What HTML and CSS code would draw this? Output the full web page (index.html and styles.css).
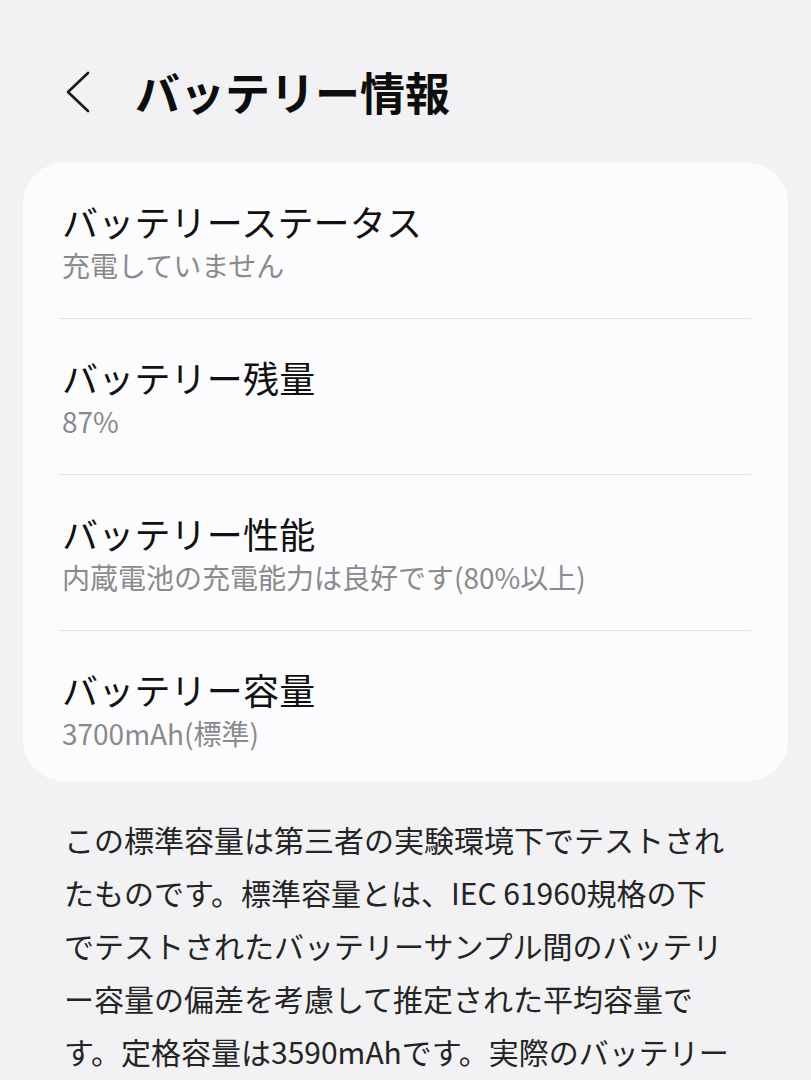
FILE: index.html
```html
<!DOCTYPE html>
<html lang="ja">
<head>
<meta charset="utf-8">
<title>バッテリー情報</title>
<link rel="stylesheet" href="styles.css">
</head>
<body>
<div class="screen">
  <header class="topbar">
    <button class="back" aria-label="戻る">
      <svg width="30" height="46" viewBox="0 0 30 46"><path d="M25 4 L5 23 L25 42" fill="none" stroke="#1a1a1a" stroke-width="2.6" stroke-linecap="round" stroke-linejoin="round"/></svg>
    </button>
    <h1 class="title">バッテリー情報</h1>
  </header>

  <section class="card">
    <div class="item">
      <div class="item-title">バッテリーステータス</div>
      <div class="item-sub">充電していません</div>
    </div>
    <div class="item">
      <div class="item-title">バッテリー残量</div>
      <div class="item-sub">87%</div>
    </div>
    <div class="item">
      <div class="item-title">バッテリー性能</div>
      <div class="item-sub">内蔵電池の充電能力は良好です(80%以上)</div>
    </div>
    <div class="item">
      <div class="item-title">バッテリー容量</div>
      <div class="item-sub">3700mAh(標準)</div>
    </div>
  </section>

  <p class="note">この標準容量は第三者の実験環境下でテストされ<br>たものです。標準容量とは、IEC 61960規格の下<br>でテストされたバッテリーサンプル間のバッテリ<br>ー容量の偏差を考慮して推定された平均容量で<br>す。定格容量は3590mAhです。実際のバッテリー</p>
</div>
</body>
</html>
```

FILE: styles.css
```css
html, body {
  margin: 0;
  padding: 0;
  background: #f2f2f4;
}
body {
  font-family: "Noto Sans CJK JP", "Noto Sans", sans-serif;
  color: #111;
  overflow: hidden;
  height: 1080px;
}
.screen {
  width: 811px;
  padding: 0 23px;
  box-sizing: border-box;
}
.topbar {
  display: flex;
  align-items: center;
  height: 56px;
  padding-top: 64px;
  margin-bottom: 43px;
}
.back {
  border: 0;
  background: none;
  padding: 0;
  margin-left: 40px;
  width: 30px;
  height: 46px;
  display: flex;
  align-items: center;
  justify-content: center;
}
.title {
  margin: 0 0 0 42px;
  font-size: 45px;
  font-weight: 700;
  line-height: 56px;
  color: #0d0d0d;
}
.card {
  background: #fcfcfe;
  border-radius: 40px;
  padding: 0 37px 0 35px;
}
.item {
  padding: 36px 0 35px 4px;
  border-bottom: 1px solid #e4e4e6;
}
.item:last-child {
  border-bottom: 0;
  padding-bottom: 30px;
}
.item-title {
  font-size: 36px;
  line-height: 44px;
  color: #111;
  letter-spacing: 0.2px;
}
.item-sub {
  margin-top: 4px;
  font-size: 28px;
  line-height: 36px;
  color: #8a8a8c;
}
.note {
  margin: 32px 0 0 0;
  padding: 0 20px 0 41px;
  font-size: 30px;
  line-height: 53px;
  color: #242424;
  white-space: nowrap;
}
```
